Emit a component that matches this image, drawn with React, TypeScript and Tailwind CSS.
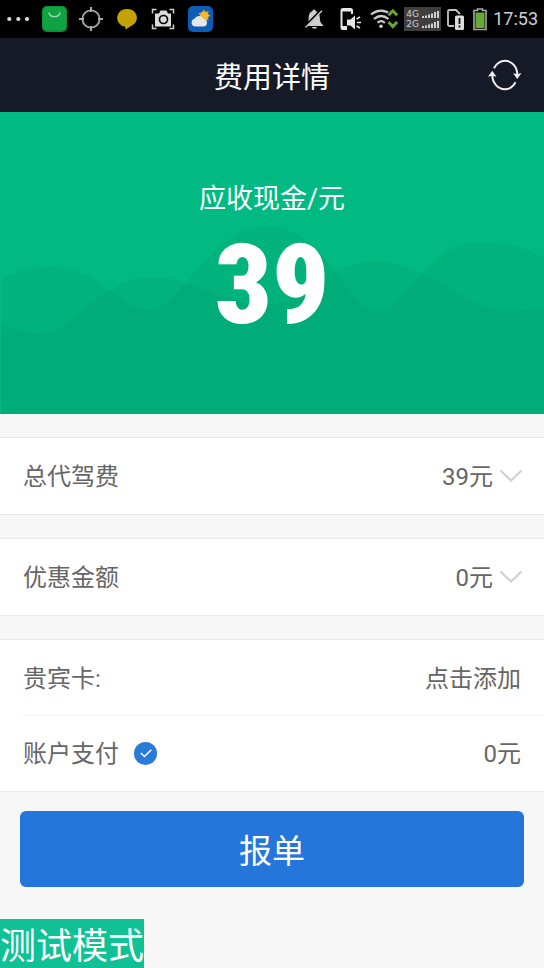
import { useState } from "react";
import type { ReactNode } from "react";

function StatusBar() {
  return (
    <div className="flex h-[38px] items-center justify-between bg-black pl-1.5 pr-1.5">
      <div className="flex items-center gap-3">
        <svg className="h-[26px] w-6" viewBox="0 0 24 26" fill="#dcdcdc">
          <circle cx="3.3" cy="13" r="2.1" />
          <circle cx="12.3" cy="13" r="2.1" />
          <circle cx="21" cy="13" r="2.1" />
        </svg>
        <svg className="h-[26px] w-[25px]" viewBox="0 0 25 26">
          <rect width="25" height="26" rx="5" fill="#0b8f37" />
          <rect x="1" y="1" width="23" height="23" rx="4" fill="#10a344" />
          <path d="M7 7a5.600 4.500 0 0 0 11 0" fill="none" stroke="#9fd9ae" strokeWidth="1.300" strokeLinecap="round" />
        </svg>
        <svg className="h-[26px] w-[25px]" viewBox="0 0 25 26" fill="none" stroke="#a9a9a9">
          <circle cx="12" cy="13" r="8.600" strokeWidth="1.800" />
          <path d="M12 1v5M12 20v5M0 13h5M19 13h5" strokeWidth="2" />
        </svg>
        <svg className="h-[26px] w-[22px]" viewBox="0 0 22 26">
          <path d="M11.500 3a9 8.800 0 0 1 3.600 17Q11.500 22 9.700 23.500L9 20.600A9 8.800 0 0 1 11.500 3Z" fill="#c3a203" />
        </svg>
        <svg className="h-[26px] w-[26px]" viewBox="0 0 26 26" fill="none" stroke="#cfcfcf">
          <path d="M2.500 7.500V3.500h4M19.500 3.500h4v4M23.500 18.500v4h-4M6.500 22.500h-4v-4" strokeWidth="1.500" />
          <path d="M5 7.500h4l1.500-3h6l1.500 3h3v13H5Z" fill="#dcdcdc" stroke="none" />
          <circle cx="13.500" cy="13.500" r="4" fill="#dcdcdc" stroke="#000" strokeWidth="1.700" />
        </svg>
        <svg className="h-[26px] w-[25px]" viewBox="0 0 25 26">
          <rect width="25" height="26" rx="5" fill="#0d5cb8" />
          <path d="M16 3.500l1.500 2.500 3-1-.5 3 2.500 1.500-2.500 2 .5 3-3-.5-2 2-1.500-3-3-.5 1-3-1.500-2.500 3-.5Z" fill="#d9a31a" />
          <circle cx="16.300" cy="9.800" r="4" fill="#efb92a" />
          <path d="M7 20.500a4 4 0 0 1-.5-7.800 5 5 0 0 1 9 .3 3.800 3.800 0 0 1 .5 7.500Z" fill="#e4e6e6" />
        </svg>
      </div>
      <div className="flex items-center gap-[5px]">
        <svg className="h-[26px] w-[30px]" viewBox="0 0 30 26">
          <path d="M11 3.500a1.700 1.700 0 0 1 1.700 1.700c3 .8 4 3 4.100 6.300.1 4 1 6 3.200 7.500v1H3v-1c2.200-1.500 2.600-3.500 2.700-7.500.1-3.300 1-5.500 3.700-6.300A1.700 1.700 0 0 1 11 3.500Z" fill="#cfcfcf" />
          <path d="M9 21h5a2.500 1.800 0 0 1-5 0Z" fill="#cfcfcf" />
          <path d="M2.200 20.500 18.500 4" stroke="#000" strokeWidth="2.500" />
          <path d="M2.500 21.500 19 4.800" stroke="#cfcfcf" strokeWidth="1.400" />
        </svg>
        <svg className="h-[26px] w-[26px]" viewBox="0 0 26 26" fill="none">
          <path d="M14 8V4.500Q14 3 12.500 3H5Q3.500 3 3.500 4.500v17Q3.500 23 5 23h4" stroke="#e6e6e6" strokeWidth="2" />
          <path d="M3 3h11v2.500H3ZM4 20h5v3H4Z" fill="#e6e6e6" />
          <path d="M9 13.500h3.500l4.500-4v14L12.500 19.500H9Z" fill="#e6e6e6" />
          <path d="M18.500 13l3.500-2M19 16.500h4M18.500 20l3.500 2" stroke="#e6e6e6" strokeWidth="1.500" />
        </svg>
        <svg className="h-[26px] w-[30px]" viewBox="0 0 30 26" fill="none">
          <g stroke="#cdcdcd" strokeWidth="2.200">
            <path d="M2 8.500Q12 .8 22 8.500" />
            <path d="M5 13Q12 7 19.500 13" />
            <path d="M8.500 16.800Q12 13.500 15.800 16.800" />
          </g>
          <circle cx="12" cy="20.300" r="1.800" fill="#cdcdcd" />
          <path d="m19.500 9 4.300-4.500L28.100 9M19.500 16l4.300 4.500 4.300-4.500" stroke="#000" strokeWidth="4" />
          <path d="m19.500 9.300 4.300-4.500 4.300 4.500M19.500 16l4.300 4.500 4.300-4.500" stroke="#67a936" strokeWidth="3" />
        </svg>
        <div className="flex h-6 w-[37px] flex-col justify-center bg-[#3f3f3f] px-0.5">
          <SignalRow label="4G" />
          <SignalRow label="2G" />
        </div>
        <svg className="h-[26px] w-[21px]" viewBox="0 0 21 26" fill="none">
          <path d="M8 20H3.500Q2 20 2 18.500v-13Q2 4 3.500 4H10l4 4" stroke="#c4c4c4" strokeWidth="1.800" />
          <rect x="9" y="9.500" width="9" height="14.500" rx="1.500" fill="#dcdcdc" />
          <path d="M13.500 12v6M13.500 19.500v2" stroke="#111" strokeWidth="1.800" />
        </svg>
        <svg className="h-[26px] w-[16px]" viewBox="0 0 16 26" fill="none">
          <path d="M5.500 4.500V3h5v1.500h3.500v19H2v-19Z" stroke="#a8a8a8" strokeWidth="1.600" />
          <rect x="3.500" y="6.500" width="9" height="15.500" fill="#67a936" />
        </svg>
        <time className="text-[18px] leading-6 text-[#cfcfcf]">17:53</time>
      </div>
    </div>
  );
}

function SignalRow({ label }: { label: string }) {
  return (
    <div className="flex h-[10px] items-center justify-between">
      <span className="font-['DejaVu_Sans',sans-serif] text-[9px] leading-[10px] text-[#cfcfcf]">{label}</span>
      <svg className="h-2 w-[17px]" viewBox="0 0 17 8" fill="#cfcfcf">
        <path d="M0 6h2v2H0ZM3 5.500h2V8H3ZM6 4.500h2V8H6ZM9 3.500h2V8H9ZM12 2h2v6h-2ZM15 1h2v7h-2Z" />
      </svg>
    </div>
  );
}

function Header() {
  return (
    <header className="grid h-[74px] grid-cols-[1fr_auto_1fr] items-center bg-[#161a27] px-[22px] text-white">
      <h1 className="col-start-2 pt-1.5 text-[29px] leading-10">费用详情</h1>
      <button type="button" aria-label="刷新" className="justify-self-end">
        <svg className="block h-[34px] w-[34px]" viewBox="0 0 34 34" fill="none">
          <g stroke="#f1f1f1" strokeWidth="2">
            <path d="M6 10.200C9 5 13 2.800 17 2.800C24 2.800 29.300 9 29.300 17" />
            <path d="M4.300 17C4.300 25 10 31.200 17 31.200C21.500 31.200 25 29 27.500 24.300" />
          </g>
          <path d="M25 15.200l4.300 1L33.500 15l-4.200 6ZM0 18.800l4.200-6 4.300 6-4.300-1Z" fill="#f1f1f1" />
        </svg>
      </button>
    </header>
  );
}

function Hero() {
  return (
    <section className="relative h-[302px] bg-[#00ba82] pt-[67px] text-center text-white">
      <svg className="absolute inset-0 h-full w-full" viewBox="0 0 544 302" preserveAspectRatio="none">
        <g fill="#009664" fillOpacity="0.2">
          <path d="M1 168C14 159 30 155 48 155C104 155 119 198 149 198C181 198 210 114 268 114C326 114 346 199 378 199C408 199 424 130 479 130C508 130 529 136 544 147V302H1Z" />
          <path d="M1 210C14 217 26 222 38 222C77 222 98 165 152 165C196 165 214 192 268 192C310 192 322 149 378 149C426 149 462 198 507 198C520 198 532 198 544 196V302H1Z" />
        </g>
      </svg>
      <p className="relative text-[27px] leading-10">应收现金/元</p>
      <p className="relative font-['Roboto_Condensed','Roboto',sans-serif] text-[112px] font-black leading-[132px]">39</p>
    </section>
  );
}

function Chevron() {
  return (
    <svg className="ml-1.5 h-[14px] w-6" viewBox="0 0 24 14" fill="none" stroke="#cfcfcf" strokeWidth="2">
      <path d="M1.500 1.500 12 11.500 22.500 1.500" />
    </svg>
  );
}

function Card({ children }: { children: ReactNode }) {
  return <section className="mt-[23px] border-y border-[#e9e9e9] bg-white">{children}</section>;
}

function ExpandRow({ label, value }: { label: string; value: string }) {
  return (
    <button type="button" className="flex h-[76px] w-full items-center pl-[23px] pr-[21px]">
      <span className="flex-1 pt-0.5 text-left">{label}</span>
      <span className="pt-0.5">{value}</span>
      <Chevron />
    </button>
  );
}

export default function App() {
  const [useAccount, setUseAccount] = useState(true);
  return (
    <div className="min-h-screen bg-[#f7f7f7] font-['Roboto','Noto_Sans_CJK_SC',sans-serif] text-2xl text-[#666666]">
      <StatusBar />
      <Header />
      <main>
        <Hero />
        <Card>
          <ExpandRow label="总代驾费" value="39元" />
        </Card>
        <Card>
          <ExpandRow label="优惠金额" value="0元" />
        </Card>
        <Card>
          <div className="flex h-[75px] items-center justify-between px-[23px]">
            <span className="pt-0.5">贵宾卡:</span>
            <button type="button" className="pt-0.5">点击添加</button>
          </div>
          <div className="ml-[23px] flex h-[76px] items-center justify-between border-t border-[#f3f3f3] pr-[23px]">
            <label className="flex items-center gap-[15px]">
              账户支付
              <span className="grid place-items-center">
                <input
                  type="checkbox"
                  checked={useAccount}
                  onChange={(e) => setUseAccount(e.target.checked)}
                  className="col-start-1 row-start-1 h-[23px] w-[23px] appearance-none rounded-full bg-[#cccccc] checked:bg-[#2a7ad9]"
                />
                <svg className="pointer-events-none col-start-1 row-start-1 h-[11px] w-3" viewBox="0 0 12 11" fill="none" stroke="#fff" strokeWidth="1.500">
                  <path d="M.8 5 4.500 8.500 11.300 1.800" />
                </svg>
              </span>
            </label>
            <span>0元</span>
          </div>
        </Card>
        <div className="mt-[19px] px-5">
          <button type="button" className="block h-[76px] w-full rounded-md bg-[#2476da] pt-1.5 text-[33px] leading-10 text-white">
            报单
          </button>
        </div>
        <p className="mt-8 h-[49px] w-fit bg-[#0fc194] pt-1 text-4xl leading-[49px] text-white">测试模式</p>
      </main>
    </div>
  );
}
